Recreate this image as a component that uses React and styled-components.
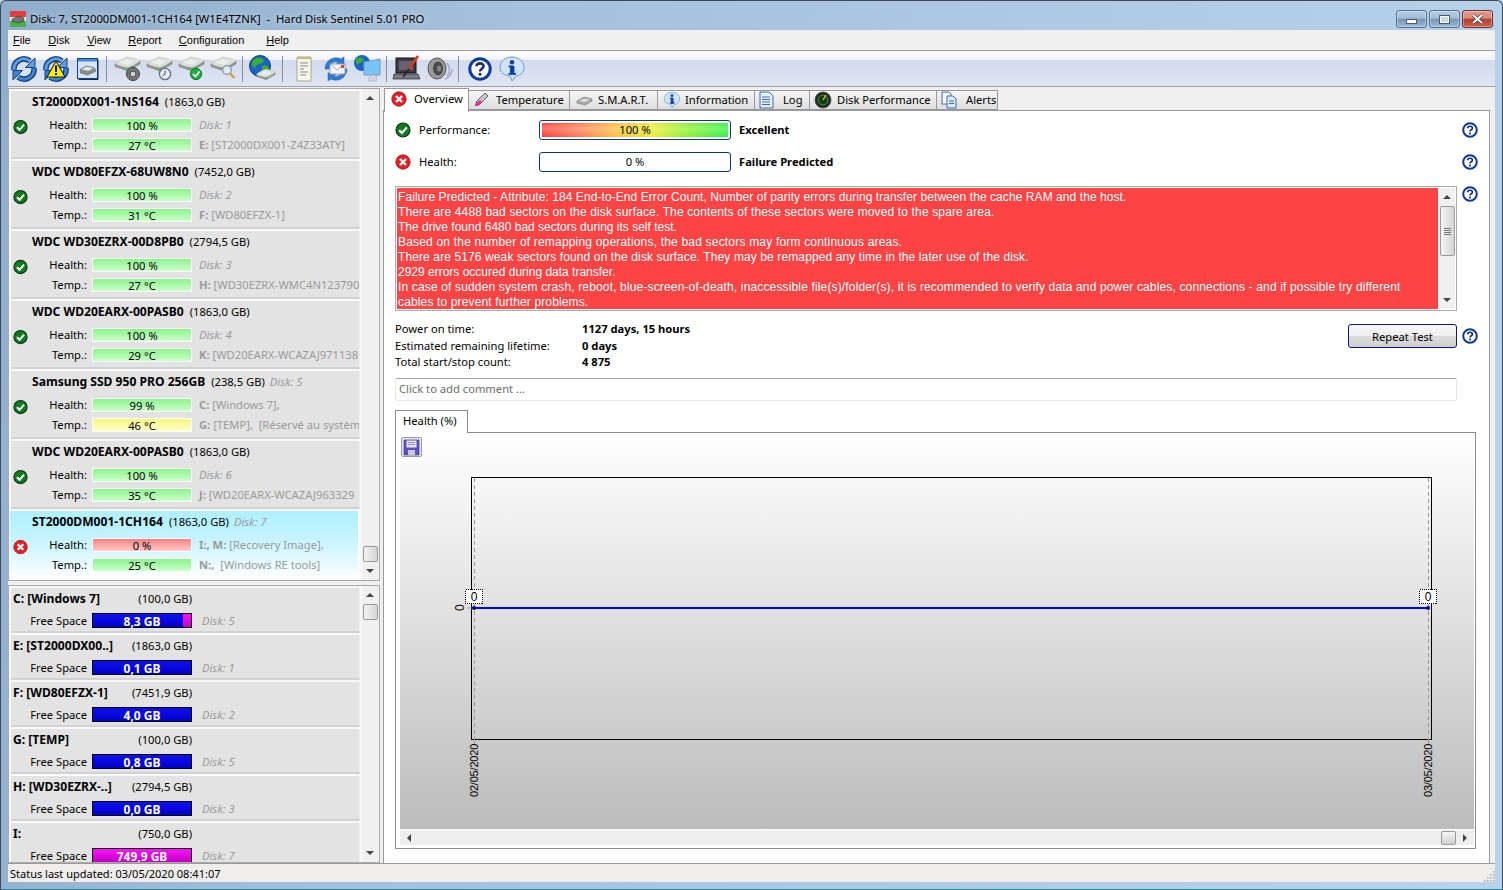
import React from "react";
import styled, { createGlobalStyle } from "styled-components";

const UI = `"Noto Sans", "Open Sans", "Liberation Sans", sans-serif`;
const Global = createGlobalStyle`
  html, body { margin: 0; padding: 0; background: #b8d2ea; }
  * { box-sizing: border-box; }
`;

const Window = styled.div`
  width: 1503px; height: 890px; overflow: hidden;
  display: flex; flex-direction: column;
  padding: 0 7px 7px;
  font: 11.2px/16px ${UI}; color: #000;
  background: linear-gradient(100deg, #8fadcc 0%, #a5c0db 30%, #b9d3ec 100%);
  border: 1px solid #3a4a58; border-bottom-color: #1d8fa0; border-radius: 6px 6px 0 0;
`;
const TitleBar = styled.div`
  height: 29px; flex: none; display: flex; align-items: center; gap: 4px;
  padding: 6px 0 0 2px; font-size: 11.3px; white-space: pre;
`;
const TitleText = styled.span`flex: 1; text-shadow: 0 0 6px rgba(255,255,255,.7);`;
const WinBtns = styled.div`display: flex; gap: 2px; margin-right: 2px; margin-top: 1px;`;
const WinBtn = styled.div`
  width: 31px; height: 18px; border: 1px solid ${p => p.$close ? "#7a2a30" : "#54708e"};
  border-radius: 3px; display: flex; align-items: center; justify-content: center;
  background: ${p => p.$close
    ? "linear-gradient(#e09a88 0%, #d98a78 45%, #b0402e 50%, #c8604a 100%)"
    : "linear-gradient(#b4cce2 0%, #a4bdd6 45%, #7596b6 50%, #9cb8d4 100%)"};
  box-shadow: inset 0 0 0 1px rgba(255,255,255,.35);
`;
const MinGlyph = styled.div`width: 11px; height: 5px; margin-top: 5px; background: #fff; border: 1px solid #4a5a70;`;
const MaxGlyph = styled.div`width: 11px; height: 9px; background: #c8d8ea; border: 2px solid #fff; outline: 1px solid #4a5a70; outline-offset: -1px;`;

const Menu = styled.div`
  height: 21px; flex: none; display: flex; align-items: center; gap: 17.5px; padding: 0 0 1px 5px;
  background: #f0f0f0; border-bottom: 1px solid #a0a0a0;
  font: 11px/16px "Liberation Sans", Arial, sans-serif;
`;
const MenuItem = styled.span`
  margin-left: ${p => p.$extra || 0}px;
  &::first-letter { text-decoration: underline; }
`;
const Toolbar = styled.div`
  height: 36px; flex: none; display: flex; align-items: center;
  border-bottom: 1px solid #a0a0a0;
  background: linear-gradient(#fdfdfe 0%, #f2f4f9 24%, #d2daed 26%, #dfe5f2 100%);
`;
const ToolBtn = styled.div`width: 32px; height: 34px; display: flex; align-items: center; justify-content: center;`;
const ToolSep = styled.div`width: 1px; height: 26px; background: #8a8f9a; margin: 0 ${p => p.$r}px 0 ${p => p.$l}px;`;

const Content = styled.div`flex: 1; min-height: 0; display: flex; background: #f0f0f0;`;
const Sidebar = styled.div`width: 372px; flex: none; display: flex; flex-direction: column; gap: 4px; padding-top: 1px;`;
const ListPanel = styled.div`
  display: flex; overflow: hidden; border: 1px solid #a9a9a9; background: #fff;
  height: ${p => p.$h}px; flex: none;
`;
const List = styled.div`
  width: 353px; flex: none; overflow: hidden; padding: ${p => p.$top}px 0 0 2px; background: #f8f8f8;
  display: flex; flex-direction: column; gap: ${p => p.$gap}px;
`;
const VScroll = styled.div`
  flex: 1; display: flex; flex-direction: column; align-items: center; background: #f0f0f0;
  padding-right: 1px; justify-content: space-between;
`;
const ScrollStack = styled.div`display: flex; flex-direction: column; align-items: center;`;
const Arrow = styled.div`
  width: 0; height: 0; flex: none; border-style: solid; border-color: transparent;
  ${p => p.$dir === "up" && "border-width: 0 4px 4px; border-bottom-color: #444;"}
  ${p => p.$dir === "down" && "border-width: 4px 4px 0; border-top-color: #444;"}
  ${p => p.$dir === "left" && "border-width: 4px 4px 4px 0; border-right-color: #444;"}
  ${p => p.$dir === "right" && "border-width: 4px 0 4px 4px; border-left-color: #444;"}
`;
const ScrollArrowBox = styled.div`
  height: ${p => p.$h || 16}px; width: 16px; display: flex; align-items: center; justify-content: center;
`;
const Thumb = styled.div`
  width: 15px; height: ${p => p.$h}px; flex: none;
  border: 1px solid #9a9a9a; border-radius: 2px;
  background: linear-gradient(90deg, #f4f4f4, #d4d4d4);
  display: flex; flex-direction: column; gap: 1px; align-items: center; justify-content: center;
`;
const Grip = styled.div`width: 7px; height: 1px; background: #777;`;

const DiskItem = styled.div`
  width: 349px; height: 68px; flex: none; overflow: hidden;
  margin-left: ${p => p.$sel ? -1 : 0}px;
  background: ${p => p.$sel ? "linear-gradient(#aef0ff 0%, #c8f4ff 45%, #fbfeff 100%)" : "#e3e3e3"};
  border-bottom: 2px solid ${p => p.$sel ? "#fff" : "#d2d2d2"};
  border-right: 1px solid ${p => p.$sel ? "#fff" : "#efefef"};
  padding: 2px 0 0 ${p => p.$sel ? 3 : 2}px;
  display: flex; flex-direction: column;
`;
const DiskTitle = styled.div`
  height: 18px; padding-left: 19px; white-space: nowrap; line-height: 18px; margin-bottom: 7px;
`;
const Bold = styled.b`font-weight: 700; font-size: 12.1px;`;
const Size = styled.span`margin-left: 6px;`;
const DiskTag = styled.i`margin-left: 5px; color: #9a9a9a;`;
const RowGrid = styled.div`
  display: grid; grid-template-columns: 15px 64px 100px 1fr; grid-template-rows: 14px 14px; row-gap: 6px;
  align-items: center;
`;
const IconCell = styled.div`grid-row: 1 / span 2; display: flex; align-items: center; margin-top: -17px;`;
const RowLabel = styled.div`
  grid-column: 2; text-align: right; padding-right: 5px; white-space: nowrap; margin-left: -6px;
`;
const Bar = styled.div`
  height: 14px; text-align: center; line-height: 14px; white-space: nowrap;
  border: 1px solid #fff;
  background: ${p => ({
    green: "linear-gradient(#8cf48c, #ccffcc)",
    yellow: "linear-gradient(#f6f680, #ffffcc)",
    red: "linear-gradient(#f88080, #ffcccc)",
  }[p.$tone])};
`;
const Side = styled.div`padding-left: 7px; color: #9a9a9a; white-space: pre; overflow: hidden;`;
const SideItalic = styled.i`color: #9a9a9a;`;
const SideBold = styled.b`font-weight: 700;`;

const VolItem = styled.div`
  width: 349px; height: 45px; flex: none; overflow: hidden;
  background: #e3e3e3; border-bottom: 2px solid #d2d2d2; border-right: 1px solid #efefef;
  padding: 2px 0 0 2px;
`;
const VolTitle = styled.div`
  width: 179px; height: 18px; display: flex; justify-content: space-between; line-height: 18px; white-space: nowrap;
  margin-bottom: 4px;
`;
const VolRow = styled.div`display: flex; align-items: center; line-height: 17px;`;
const VolLabel = styled.div`width: 74px; text-align: right; margin-right: 5px;`;
const FreeBar = styled.div`
  width: 100px; height: 15px; border: 1px solid #000; display: flex; justify-content: flex-end; position: relative;
  background: ${p => p.$full ? "linear-gradient(#ff10ff, #c000c0)" : "linear-gradient(#1010f0, #0000c8)"};
`;
const FreeSeg = styled.div`width: 8px; height: 100%; background: linear-gradient(#ff10ff, #c000c0);`;
const FreeText = styled.b`
  position: absolute; inset: 0; text-align: center; color: #fff; line-height: 15px; font-weight: 700; font-size: 12px;
`;
const VolDisk = styled.i`margin-left: 10px; color: #9a9a9a;`;

const Main = styled.div`flex: 1; min-width: 0; display: flex; flex-direction: column; margin-left: 3px; margin-right: 1px;`;
const Tabs = styled.div`height: 23px; flex: none; display: flex; align-items: flex-end; padding-left: 1px;`;
const Tab = styled.div`
  width: ${p => p.$w}px; flex: none; display: flex; align-items: center; white-space: nowrap;
  gap: ${p => p.$gap || 5}px; padding-left: ${p => p.$pad || 5}px;
  height: ${p => p.$active ? 24 : 20}px;
  margin-bottom: ${p => p.$active ? -2 : 0}px;
  position: relative; z-index: ${p => p.$active ? 2 : 1};
  background: ${p => p.$active ? "#fff" : "linear-gradient(#f6f6f6, #dedede)"};
  border: 1px solid #98989e; border-bottom: ${p => p.$active ? 0 : "1px solid #98989e"};
  border-left: ${p => p.$active ? "1px solid #98989e" : 0};
  padding-bottom: ${p => p.$active ? 3 : 0}px;
`;
const TabPanel = styled.div`
  flex: 1; min-height: 0; background: #fff; border: 1px solid #98989e; border-bottom: 0;
  padding: 9px 11px 0 11px; display: flex; flex-direction: column; width: 1107px;
`;
const StatRow = styled.div`height: 20px; flex: none; display: flex; align-items: center; margin-bottom: ${p => p.$mb}px;`;
const StatName = styled.div`width: 144px; flex: none; display: flex; align-items: center; gap: 8px;`;
const StatBar = styled.div`
  width: 192px; height: 20px; flex: none; border: 1px solid #0c3a6c; border-radius: 3px; padding: 2px;
  text-align: center; line-height: 14px; background: #fff;
`;
const StatFill = styled.div`
  height: 14px; line-height: 14px;
  background:
    linear-gradient(rgba(255,255,255,.05), rgba(255,255,255,.28) 40%, rgba(255,255,255,0)),
    linear-gradient(90deg, #ff3c3c 0%, #ff7a50 20%, #ffc040 40%, #e8ee30 60%, #80f030 80%, #30f040 100%);
`;
const StatVal = styled.b`flex: 1; font-weight: 700; margin-left: 8px;`;
const HelpSlot = styled.div`width: 16px; flex: none; display: flex; margin-top: ${p => p.$mt || 0}px;`;
const AlertRow = styled.div`display: flex; gap: 5px; height: 125px; flex: none; align-items: flex-start;`;
const AlertBox = styled.div`
  width: 1062px; height: 125px; flex: none; display: flex; border: 1px solid #acacac; padding: 1px;
`;
const AlertText = styled.div`
  flex: 1; background: #fc4444; color: #fff; padding: 2px 0 0 1px; margin-right: 1px;
  font: 12px/15px "Liberation Sans", Arial, sans-serif; overflow: hidden;
`;
const AlertLine = styled.div`white-space: nowrap; letter-spacing: ${p => p.$ls}px;`;
const AlertScroll = styled.div`width: 16px; flex: none; background: #f0f0f0; display: flex; flex-direction: column; align-items: center;`;
const AlertTrack = styled.div`flex: 1; min-height: 0;`;
const InfoRow = styled.div`display: flex; align-items: flex-start; gap: 5px; margin-top: 10px; height: 57px; flex: none;`;
const InfoList = styled.div`width: 948px; flex: none; display: grid; grid-template-columns: 187px 1fr; grid-auto-rows: 16.5px; align-items: center;`;
const InfoVal = styled.b`font-weight: 700;`;
const Repeat = styled.div`
  width: 109px; height: 24px; flex: none; margin-top: 3px; border: 1px solid #0a1a6a; border-radius: 3px;
  text-align: center; line-height: 23px; background: linear-gradient(#f6f6f6, #f0f0f0 48%, #dcdcdc 52%, #cfcfcf);
`;
const Comment = styled.div`
  width: 1062px; height: 23px; flex: none; border: 1px solid #e4e7ee; border-top-color: #a4a4aa; border-radius: 2px;
  color: #6d6d6d; padding-left: 3px; line-height: 20px; margin-bottom: 9px;
`;
const ChartTab = styled.div`
  width: 73px; height: 23px; flex: none; border: 1px solid #8c8c96; border-bottom: 0; background: #fff;
  padding-left: 7px; line-height: 19px; margin-bottom: -1px; position: relative; z-index: 2;
`;
const ChartFrame = styled.div`
  width: 1081px; height: 417px; flex: none; border: 1px solid #8c8c96; padding: 0 1px 3px 4px; display: flex; flex-direction: column; background: #fff;
`;
const ChartSurface = styled.div`
  flex: 1; min-height: 0; position: relative;
  background: linear-gradient(#ffffff 0%, #bcbcbc 100%);
`;
const SaveBtn = styled.div`
  position: absolute; left: 1px; top: 4px; width: 21px; height: 20px; border: 1px solid #9a9a9a; border-radius: 2px;
  background: #e4e4e4; display: flex; align-items: center; justify-content: center;
`;
const ChartSvg = styled.svg`position: absolute; left: 0; top: 0;`;
const HScroll = styled.div`height: 15px; flex: none; margin-top: 1px; display: flex; align-items: center; background: #eeeeee;`;
const HThumb = styled.div`
  width: 15px; height: 14px; margin-left: auto; border: 1px solid #9a9a9a; border-radius: 2px;
  background: linear-gradient(#f6f6f6, #cfcfcf);
`;
const HArrow = styled.div`width: 18px; flex: none; display: flex; justify-content: center;`;
const Status = styled.div`
  height: 19px; flex: none; background: #f0eeec; border-top: 1px solid #9a9a9a; padding: 1px 0 0 2px; line-height: 17px;
  font-size: 11px; display: flex; justify-content: space-between;
`;
const StatusGrip = styled.div`align-self: flex-end; display: flex;`;

/* ---------- icons ---------- */
const OkIcon = ({ s = 16 }) => (
  <svg width={s} height={s} viewBox="0 0 16 16">
    <circle cx="8" cy="8" r="7" fill="#0c7c1c" stroke="#10301a" strokeWidth="1.2" />
    <path d="M4.2 8.2 7 11 11.8 5.4" fill="none" stroke="#fff" strokeWidth="2.2" />
  </svg>
);
const ErrIcon = ({ s = 16 }) => (
  <svg width={s} height={s} viewBox="0 0 16 16">
    <circle cx="8" cy="8" r="7.2" fill="#ea1c24" stroke="#8a1c20" strokeWidth=".8" />
    <path d="M5 5 11 11M11 5 5 11" stroke="#fff" strokeWidth="2.4" />
  </svg>
);
const HelpIcon = ({ s = 16 }) => (
  <svg width={s} height={s} viewBox="0 0 16 16">
    <circle cx="8" cy="8" r="6.8" fill="#fff" stroke="#0c3a9c" strokeWidth="2" />
    <path d="M5.6 6.2C5.6 3.6 10.4 3.6 10.4 6.2 10.4 7.8 8 7.8 8 9.6" fill="none" stroke="#1a2a6c" strokeWidth="1.7" />
    <rect x="7.1" y="10.6" width="1.8" height="1.8" fill="#1a2a6c" />
  </svg>
);
const Drive = () => (
  <g>
    <path d="M2 9.5 14 3 27 6.5 27 10 15 17 2 12.5Z" fill="#8f958f" stroke="#7a807a" strokeWidth=".5" />
    <path d="M2 9.5C3 8 12 3 14 3 17 3 26 5 27 6.5 27 8 17 13.5 15 13.5 12 13.5 3 11 2 9.5Z" fill="#d9dcd9" />
    <path d="M6 9 13.5 5 22 7 15 11Z" fill="#eceeec" />
    <rect x="13.5" y="14" width="2" height="2.5" fill="#3ecb3e" />
  </g>
);
const DriveIcon = ({ badge }) => (
  <svg width="30" height="30" viewBox="0 0 30 30">
    <Drive />
    {badge === "gear" && <g><circle cx="20" cy="20" r="6.5" fill="#77777c" stroke="#3a3a3a" /><circle cx="20" cy="20" r="3" fill="#d0d0d0" stroke="#444" /></g>}
    {badge === "clock" && <g><circle cx="20" cy="20" r="5.6" fill="#e6eef6" stroke="#667088" strokeWidth="1.4" /><path d="M20 20V16.5M20 20 17.5 22" stroke="#345" fill="none" /></g>}
    {badge === "ok" && <g><circle cx="19" cy="20" r="5.6" fill="#22b044" stroke="#0e6e28" /><path d="M16 20 18.5 22.5 22.5 17.5" stroke="#fff" strokeWidth="1.7" fill="none" /></g>}
    {badge === "find" && <g><circle cx="18" cy="16" r="4.3" fill="#dcecf9" stroke="#8a94a8" strokeWidth="1.2" /><path d="M21 19.5 25.5 24" stroke="#d89a3a" strokeWidth="2.4" /></g>}
  </svg>
);
const RefreshIcon = ({ warn }) => (
  <svg width="28" height="28" viewBox="0 0 28 28">
    <g fill="none" strokeLinecap="butt">
      <path d="M4 15A10 10 0 0 1 20 6" stroke="#123e80" strokeWidth="5.6" />
      <path d="M24 13A10 10 0 0 1 8 22" stroke="#123e80" strokeWidth="5.6" />
      <path d="M4 15A10 10 0 0 1 20 6" stroke="#5c9ede" strokeWidth="3" />
      <path d="M24 13A10 10 0 0 1 8 22" stroke="#3c86cc" strokeWidth="3" />
    </g>
    <path d="M25 3V12.5H15.5Z" fill="#5c9ede" stroke="#123e80" strokeWidth="1" />
    <path d="M3 25V15.5H12.5Z" fill="#3c86cc" stroke="#123e80" strokeWidth="1" />
    {warn && <g>
      <path d="M14 6 23 22H5Z" fill="#fff000" stroke="#222" strokeWidth="1.1" />
      <rect x="13" y="10.5" width="2" height="6.5" fill="#111" /><rect x="13" y="18" width="2" height="2" fill="#111" />
    </g>}
  </svg>
);
const BoxIcon = () => (
  <svg width="22" height="22" viewBox="0 0 22 22">
    <rect x=".5" y=".5" width="20" height="20" fill="#d6e6fa" stroke="#10408c" />
    <rect x="1" y="1" width="19" height="2.5" fill="#4a88dc" />
    <path d="M3 11.5 9.5 8 17 9.5 18.5 11.5 18.5 13.5 10.5 17 3.5 15Z" fill="#8a8e8a" stroke="#555" strokeWidth=".5" />
    <path d="M4.5 11.2 9.5 8.8 16.5 10 11 13Z" fill="#e4e6e4" />
    <path d="M21 1.5V21.5H1.5" fill="none" stroke="#0a2a60" />
  </svg>
);
const GlobeIcon = () => (
  <svg width="30" height="30" viewBox="0 0 30 30">
    <circle cx="13" cy="12" r="10.5" fill="#1a62c8" stroke="#0e3c80" />
    <path d="M6 6C10 3 15 3 17 7 14 11 9 9 8 14 5 13 4 9 6 6ZM15 12C19 10 22 12 22 15 18 19 14 18 15 12Z" fill="#38b030" />
    <g transform="translate(8 13) scale(.75)"><Drive /></g>
  </svg>
);
const DocIcon = () => (
  <svg width="22" height="28" viewBox="0 0 22 28">
    <path d="M4 2H18V26H4Z" fill="#f6f5ea" stroke="#a8a898" />
    <path d="M4 2H18V4H4Z" fill="#c8b880" />
    <path d="M7 8H15M7 11H15M7 14H11M7 17H15M7 20H13" stroke="#8a8a8a" />
  </svg>
);
const MailIcon = () => (
  <svg width="30" height="30" viewBox="0 0 30 30">
    <path d="M4 15A11 11 0 0 1 20 5L23 3V11H14L17 8A7 7 0 0 0 8 15Z" fill="#2a7cd4" stroke="#1a5aa0" strokeWidth=".5" />
    <path d="M26 15A11 11 0 0 1 10 25L7 27V19H16L13 22A7 7 0 0 0 22 15Z" fill="#2a7cd4" stroke="#1a5aa0" strokeWidth=".5" />
    <rect x="9" y="10" width="15" height="10" fill="#f8f8fc" stroke="#9a9ab0" />
    <path d="M9 10 16 16 24 10" fill="none" stroke="#a4a4b8" />
    <rect x="20" y="11" width="3" height="3" fill="#d84040" />
  </svg>
);
const GlobePc = () => (
  <svg width="30" height="30" viewBox="0 0 30 30">
    <circle cx="9" cy="9" r="8" fill="#1a62c8" />
    <path d="M4 4C7 3 10 3 11 6 9 9 6 8 5 11 3 10 2 7 4 4Z" fill="#38b030" />
    <path d="M11 8 27 5V21L11 21Z" fill="#78c4f4" stroke="#7a9ab8" />
    <path d="M17 21H23L24 27H15Z" fill="#d0d4dc" stroke="#a0a4ac" strokeWidth=".5" />
  </svg>
);
const LaptopIcon = () => (
  <svg width="30" height="30" viewBox="0 0 30 30">
    <rect x="4" y="4" width="20" height="15" fill="#3c3c44" stroke="#111" />
    <path d="M7 7H21V16H7Z" fill="#6a6070" />
    <path d="M2 20H26L28 25H1Z" fill="#7a7a80" stroke="#111" strokeWidth=".6" />
    <path d="M26 2 17 15" stroke="#d8381c" strokeWidth="2.6" />
    <path d="M17 15 11 23" stroke="#222" strokeWidth="1.6" />
  </svg>
);
const SpeakerIcon = () => (
  <svg width="28" height="28" viewBox="0 0 28 28">
    <ellipse cx="12" cy="13.5" rx="9" ry="10.5" fill="#9a9a9a" stroke="#555" />
    <ellipse cx="13" cy="13.5" rx="5" ry="7" fill="#4a4a4a" />
    <ellipse cx="14" cy="13.5" rx="2" ry="3" fill="#888" />
    <path d="M22 8C25 12 25 17 22 21M20 24C24 23 27 19 27 14" fill="none" stroke="#a4a4c8" strokeWidth="1.4" />
  </svg>
);
const InfoBubble = ({ s = 28 }) => (
  <svg width={s} height={s} viewBox="0 0 28 28">
    <path d="M14 2C21 2 26 6.5 26 12.5 26 18.5 21 21 18 21L14 26 12 21C6 20 2 17.5 2 12.5 2 6.5 7 2 14 2Z" fill="#d0e4f8" stroke="#6a9ac8" />
    <rect x="12" y="11" width="4.4" height="8" fill="#103e9c" />
    <rect x="10.5" y="10.5" width="5" height="1.8" fill="#103e9c" />
    <rect x="10.5" y="18" width="7.5" height="1.8" fill="#103e9c" />
    <circle cx="14" cy="7.2" r="2.2" fill="#103e9c" />
  </svg>
);
const TitleLogo = () => (
  <svg width="16" height="16" viewBox="0 0 16 16">
    <rect width="16" height="6" fill="#e83c3c" /><rect y="6" width="16" height="4" fill="#f0f0f0" /><rect y="10" width="16" height="6" fill="#48b048" />
    <path d="M2 8 8 5 14 7 14 10 8 12 2 10Z" fill="#777" stroke="#222" strokeWidth=".5" />
  </svg>
);
const ThermoIcon = () => (
  <svg width="18" height="18" viewBox="0 0 18 18">
    <path d="M13 2 16 5 7 14 4 11Z" fill="#c8c8c8" stroke="#666" />
    <path d="M8 9 10 11 6 15 3 15 3 13Z" fill="#e0309a" />
  </svg>
);
const ChipIcon = () => (
  <svg width="17" height="16" viewBox="0 0 17 16">
    <path d="M1 9 8 5 16 7 16 9 9 13 1 11Z" fill="#a8a8a8" stroke="#777" strokeWidth=".6" />
    <path d="M3 9 8 6.5 14 7.5 9 10Z" fill="#dcdcdc" />
  </svg>
);
const LogIcon = () => (
  <svg width="17" height="18" viewBox="0 0 17 18">
    <path d="M2 1H11L15 5V17H2Z" fill="#e8f0fa" stroke="#3a6ab0" />
    <path d="M4 6H12M4 8.5H12M4 11H12M4 13.5H12" stroke="#3a6ab8" />
  </svg>
);
const GaugeIcon = () => (
  <svg width="18" height="18" viewBox="0 0 18 18">
    <circle cx="9" cy="9" r="8" fill="#222" stroke="#555" />
    <circle cx="9" cy="9" r="5" fill="#143c14" stroke="#3aa03a" />
    <path d="M9 9 12 4" stroke="#e8c030" strokeWidth="1.4" />
  </svg>
);
const AlertsIcon = () => (
  <svg width="18" height="18" viewBox="0 0 18 18">
    <path d="M2 1H9L11 3V13H2Z" fill="#f4f8fc" stroke="#4a6a9a" />
    <path d="M7 5H13L16 8V17H7Z" fill="#dceafa" stroke="#3a6ab0" />
    <path d="M9 10H14M9 12.5H14" stroke="#3a6ab8" />
  </svg>
);
const SaveIcon = () => (
  <svg width="17" height="17" viewBox="0 0 17 17">
    <path d="M1 1H16V16H1Z" fill="#5a50c0" stroke="#3a3090" strokeWidth=".6" />
    <rect x="3.5" y="1.5" width="10" height="7" fill="#e8e4f8" />
    <path d="M5 3.5H12M5 5.5H12" stroke="#9a90d8" />
    <rect x="5" y="11" width="7" height="5" fill="#c8c8dc" />
  </svg>
);
const GripIcon = () => (
  <svg width="11" height="11" viewBox="0 0 11 11">
    {[[9, 1], [6, 4], [9, 4], [3, 7], [6, 7], [9, 7], [0, 10], [3, 10], [6, 10], [9, 10]].map(([x, y]) => (
      <rect key={`${x}-${y}`} x={x} y={y - 1} width="1.6" height="1.6" fill="#b0aeaa" />
    ))}
  </svg>
);

/* ---------- data ---------- */
const disks = [
  { name: "ST2000DX001-1NS164", size: "(1863,0 GB)", h: "100 %", t: "27 °C", d: "Disk: 1", v: ["E:", " [ST2000DX001-Z4Z33ATY]"] },
  { name: "WDC WD80EFZX-68UW8N0", size: "(7452,0 GB)", h: "100 %", t: "31 °C", d: "Disk: 2", v: ["F:", " [WD80EFZX-1]"] },
  { name: "WDC WD30EZRX-00D8PB0", size: "(2794,5 GB)", h: "100 %", t: "27 °C", d: "Disk: 3", v: ["H:", " [WD30EZRX-WMC4N123790"] },
  { name: "WDC WD20EARX-00PASB0", size: "(1863,0 GB)", h: "100 %", t: "29 °C", d: "Disk: 4", v: ["K:", " [WD20EARX-WCAZAJ971138"] },
  { name: "Samsung SSD 950 PRO 256GB", size: "(238,5 GB)", tag: "Disk: 5", h: "99 %", t: "46 °C", tTone: "yellow", l1: ["C:", " [Windows 7],"], v: ["G:", " [TEMP],  [Réservé au systèm"] },
  { name: "WDC WD20EARX-00PASB0", size: "(1863,0 GB)", h: "100 %", t: "35 °C", d: "Disk: 6", v: ["J:", " [WD20EARX-WCAZAJ963329"] },
  { name: "ST2000DM001-1CH164", size: "(1863,0 GB)", tag: "Disk: 7", h: "0 %", hTone: "red", t: "25 °C", sel: true, l1: ["I:, M:", " [Recovery Image],"], v: ["N:,", "  [Windows RE tools]"] },
];
const volumes = [
  { name: "C: [Windows 7]", size: "(100,0 GB)", free: "8,3 GB", disk: "Disk: 5", seg: true },
  { name: "E: [ST2000DX00..]", size: "(1863,0 GB)", free: "0,1 GB", disk: "Disk: 1" },
  { name: "F: [WD80EFZX-1]", size: "(7451,9 GB)", free: "4,0 GB", disk: "Disk: 2" },
  { name: "G: [TEMP]", size: "(100,0 GB)", free: "0,8 GB", disk: "Disk: 5" },
  { name: "H: [WD30EZRX-..]", size: "(2794,5 GB)", free: "0,0 GB", disk: "Disk: 3" },
  { name: "I:", size: "(750,0 GB)", free: "749,9 GB", disk: "Disk: 7", full: true },
];
const tabs = [
  { label: "Overview", w: 85, active: true, icon: <ErrIcon />, gap: 7, pad: 6 },
  { label: "Temperature", w: 101, icon: <ThermoIcon />, gap: 6, pad: 3 },
  { label: "S.M.A.R.T.", w: 88, icon: <ChipIcon />, gap: 5, pad: 6 },
  { label: "Information", w: 97, icon: <InfoBubble s={18} />, gap: 4, pad: 5 },
  { label: "Log", w: 55, icon: <LogIcon />, gap: 8, pad: 3 },
  { label: "Disk Performance", w: 127, icon: <GaugeIcon />, gap: 5, pad: 4 },
  { label: "Alerts", w: 61, icon: <AlertsIcon />, gap: 8, pad: 3 },
];
const alertLines = [
  ["Failure Predicted - Attribute: 184 End-to-End Error Count, Number of parity errors during transfer between the cache RAM and the host.", 0.07],
  ["There are 4488 bad sectors on the disk surface. The contents of these sectors were moved to the spare area.", 0.14],
  ["The drive found 6480 bad sectors during its self test.", 0],
  ["Based on the number of remapping operations, the bad sectors may form continuous areas.", 0.19],
  ["There are 5176 weak sectors found on the disk surface. They may be remapped any time in the later use of the disk.", 0.11],
  ["2929 errors occured during data transfer.", 0],
  ["In case of sudden system crash, reboot, blue-screen-of-death, inaccessible file(s)/folder(s), it is recommended to verify data and power cables, connections - and if possible try different", 0.15],
  ["cables to prevent further problems.", 0.14],
];

const VolText = ({ v }) => <><SideBold>{v[0]}</SideBold>{v[1]}</>;

const ChartGraphic = () => (
  <ChartSvg width="1074" height="397" viewBox="0 0 1074 397" fontFamily={`"Liberation Sans", Arial, sans-serif`} fontSize="12">
    <rect x="71.5" y="44.5" width="960" height="262" fill="none" stroke="#000" />
    <path d="M74.5 45V307M1028.5 45V307" stroke="#9a9a9a" strokeDasharray="4 3" />
    <path d="M67 175H72M74.5 307V311M1028.5 307V311" stroke="#999" />
    <path d="M74 175H1028" stroke="#0000f0" strokeWidth="2" />
    <circle cx="74" cy="175" r="2" fill="#000080" />
    <circle cx="1028" cy="175" r="2" fill="#000080" />
    <rect x="65.5" y="156.5" width="17" height="14" fill="#fff" stroke="#000" strokeDasharray="1 1" shapeRendering="crispEdges" />
    <rect x="1019.5" y="156.5" width="17" height="14" fill="#fff" stroke="#000" strokeDasharray="1 1" shapeRendering="crispEdges" />
    <text x="74" y="168" textAnchor="middle">0</text>
    <text x="1028" y="168" textAnchor="middle">0</text>
    <text transform="translate(64 178) rotate(-90)">0</text>
    <text transform="translate(78 364) rotate(-90)" fontSize="11" letterSpacing="-.2">02/05/2020</text>
    <text transform="translate(1032 364) rotate(-90)" fontSize="11" letterSpacing="-.2">03/05/2020</text>
  </ChartSvg>
);

export default function App() {
  return (
    <Window>
      <Global />
      <TitleBar>
        <TitleLogo />
        <TitleText>Disk: 7, ST2000DM001-1CH164 [W1E4TZNK]  -  Hard Disk Sentinel 5.01 PRO</TitleText>
        <WinBtns>
          <WinBtn><MinGlyph /></WinBtn>
          <WinBtn><MaxGlyph /></WinBtn>
          <WinBtn $close>
            <svg width="15" height="12" viewBox="0 0 15 12"><path d="M3 2 12 10M12 2 3 10" stroke="#4a3a40" strokeWidth="3.4" /><path d="M3 2 12 10M12 2 3 10" stroke="#fff" strokeWidth="2" /></svg>
          </WinBtn>
        </WinBtns>
      </TitleBar>
      <Menu>
        {["File", "Disk", "View", "Report", "Configuration"].map(m => <MenuItem key={m}>{m}</MenuItem>)}
        <MenuItem $extra={4.5}>Help</MenuItem>
      </Menu>
      <Toolbar>
        <ToolBtn><RefreshIcon /></ToolBtn>
        <ToolBtn><RefreshIcon warn /></ToolBtn>
        <ToolBtn><BoxIcon /></ToolBtn>
        <ToolSep $l={2} $r={5} />
        <ToolBtn><DriveIcon badge="gear" /></ToolBtn>
        <ToolBtn><DriveIcon badge="clock" /></ToolBtn>
        <ToolBtn><DriveIcon badge="ok" /></ToolBtn>
        <ToolBtn><DriveIcon badge="find" /></ToolBtn>
        <ToolSep $l={2} $r={3} />
        <ToolBtn><GlobeIcon /></ToolBtn>
        <ToolSep $l={4} $r={5} />
        <ToolBtn><DocIcon /></ToolBtn>
        <ToolBtn><MailIcon /></ToolBtn>
        <ToolBtn><GlobePc /></ToolBtn>
        <ToolSep $l={2} $r={4} />
        <ToolBtn><LaptopIcon /></ToolBtn>
        <ToolBtn><SpeakerIcon /></ToolBtn>
        <ToolSep $l={3} $r={5} />
        <ToolBtn><HelpIcon s={24} /></ToolBtn>
        <ToolBtn><InfoBubble /></ToolBtn>
      </Toolbar>
      <Content>
        <Sidebar>
          <ListPanel $h={493}>
            <List $top={2} $gap={2}>
              {disks.map(d => (
                <DiskItem key={d.name + d.size + (d.d || d.tag)} $sel={d.sel}>
                  <DiskTitle>
                    <Bold>{d.name}</Bold><Size>{d.size}</Size>
                    {d.tag && <DiskTag>{d.tag}</DiskTag>}
                  </DiskTitle>
                  <RowGrid>
                    <IconCell>{d.sel ? <ErrIcon /> : <OkIcon />}</IconCell>
                    <RowLabel>Health:</RowLabel>
                    <Bar $tone={d.hTone || "green"}>{d.h}</Bar>
                    <Side>{d.l1 ? <VolText v={d.l1} /> : <SideItalic>{d.d}</SideItalic>}</Side>
                    <RowLabel>Temp.:</RowLabel>
                    <Bar $tone={d.tTone || "green"}>{d.t}</Bar>
                    <Side><VolText v={d.v} /></Side>
                  </RowGrid>
                </DiskItem>
              ))}
            </List>
            <VScroll>
              <ScrollArrowBox $h={18}><Arrow $dir="up" /></ScrollArrowBox>
              <ScrollStack>
                <Thumb $h={16} />
                <ScrollArrowBox $h={18}><Arrow $dir="down" /></ScrollArrowBox>
              </ScrollStack>
            </VScroll>
          </ListPanel>
          <ListPanel $h={278}>
            <List $top={2} $gap={2}>
              {volumes.map(v => (
                <VolItem key={v.name}>
                  <VolTitle><Bold>{v.name}</Bold><span>{v.size}</span></VolTitle>
                  <VolRow>
                    <VolLabel>Free Space</VolLabel>
                    <FreeBar $full={v.full}>
                      {v.seg && <FreeSeg />}
                      <FreeText>{v.free}</FreeText>
                    </FreeBar>
                    <VolDisk>{v.disk}</VolDisk>
                  </VolRow>
                </VolItem>
              ))}
            </List>
            <VScroll>
              <ScrollStack>
                <ScrollArrowBox $h={18}><Arrow $dir="up" /></ScrollArrowBox>
                <Thumb $h={16} />
              </ScrollStack>
              <ScrollArrowBox $h={18}><Arrow $dir="down" /></ScrollArrowBox>
            </VScroll>
          </ListPanel>
        </Sidebar>
        <Main>
          <Tabs>
            {tabs.map(t => (
              <Tab key={t.label} $w={t.w} $active={t.active} $gap={t.gap} $pad={t.pad}>{t.icon}{t.label}</Tab>
            ))}
          </Tabs>
          <TabPanel>
            <StatRow $mb={12}>
              <StatName><OkIcon />Performance:</StatName>
              <StatBar><StatFill>100 %</StatFill></StatBar>
              <StatVal>Excellent</StatVal>
              <HelpSlot><HelpIcon /></HelpSlot>
            </StatRow>
            <StatRow $mb={14}>
              <StatName><ErrIcon />Health:</StatName>
              <StatBar>0 %</StatBar>
              <StatVal>Failure Predicted</StatVal>
              <HelpSlot><HelpIcon /></HelpSlot>
            </StatRow>
            <AlertRow>
              <AlertBox>
                <AlertText>{alertLines.map(([l, ls]) => <AlertLine key={l} $ls={ls}>{l}</AlertLine>)}</AlertText>
                <AlertScroll>
                  <ScrollArrowBox $h={18}><Arrow $dir="up" /></ScrollArrowBox>
                  <Thumb $h={50}><Grip /><Grip /><Grip /><Grip /></Thumb>
                  <AlertTrack />
                  <ScrollArrowBox $h={18}><Arrow $dir="down" /></ScrollArrowBox>
                </AlertScroll>
              </AlertBox>
              <HelpSlot><HelpIcon /></HelpSlot>
            </AlertRow>
            <InfoRow>
              <InfoList>
                <span>Power on time:</span><InfoVal>1127 days, 15 hours</InfoVal>
                <span>Estimated remaining lifetime:</span><InfoVal>0 days</InfoVal>
                <span>Total start/stop count:</span><InfoVal>4 875</InfoVal>
              </InfoList>
              <Repeat>Repeat Test</Repeat>
              <HelpSlot $mt={7}><HelpIcon /></HelpSlot>
            </InfoRow>
            <Comment>Click to add comment ...</Comment>
            <ChartTab>Health (%)</ChartTab>
            <ChartFrame>
              <ChartSurface>
                <ChartGraphic />
                <SaveBtn><SaveIcon /></SaveBtn>
              </ChartSurface>
              <HScroll>
                <HArrow><Arrow $dir="left" /></HArrow>
                <HThumb />
                <HArrow><Arrow $dir="right" /></HArrow>
              </HScroll>
            </ChartFrame>
          </TabPanel>
        </Main>
      </Content>
      <Status>
        <span>Status last updated: 03/05/2020 08:41:07</span>
        <StatusGrip><GripIcon /></StatusGrip>
      </Status>
    </Window>
  );
}
